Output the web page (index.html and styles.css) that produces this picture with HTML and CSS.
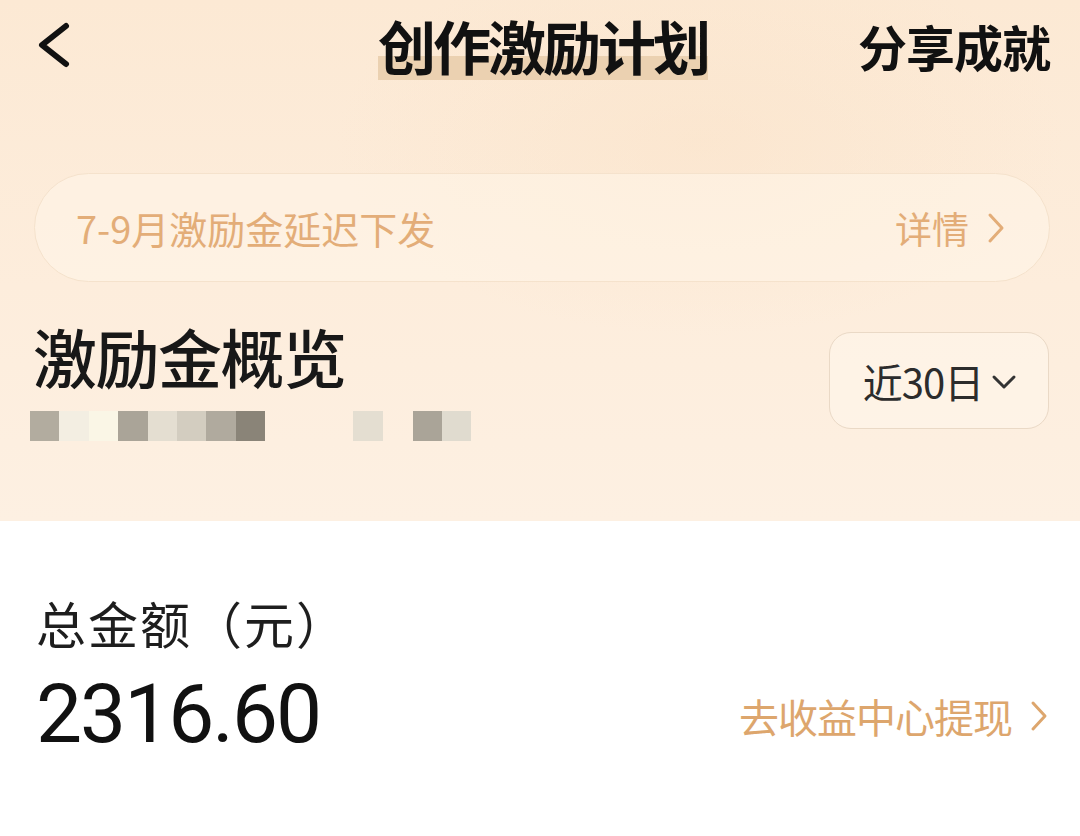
FILE: index.html
```html
<!DOCTYPE html>
<html lang="zh-CN">
<head>
<meta charset="utf-8">
<title>创作激励计划</title>
<link rel="stylesheet" href="styles.css">
</head>
<body>
<div class="page">
  <section class="top">
    <header class="nav">
      <div class="nav-left">
        <svg class="back" width="40" height="46" viewBox="0 0 40 46"><polyline points="32,4 8,23 32,42" fill="none" stroke="#111" stroke-width="6" stroke-linecap="round" stroke-linejoin="round"/></svg>
      </div>
      <h1 class="title"><span class="title-text">创作激励计划</span></h1>
      <div class="nav-right">分享成就</div>
    </header>

    <div class="notice">
      <span class="notice-text">7-9月激励金延迟下发</span>
      <span class="notice-more">详情<svg class="chev" width="18" height="32" viewBox="0 0 18 32"><polyline points="3,3 15,16 3,29" fill="none" stroke="#e3ad78" stroke-width="3" stroke-linecap="round" stroke-linejoin="round"/></svg></span>
    </div>

    <div class="overview">
      <div class="ov-left">
        <h2 class="ov-title">激励金概览</h2>
        <div class="mosaic">
          <span class="px c1"></span><span class="px c2"></span><span class="px c3"></span><span class="px c4"></span><span class="px c5"></span><span class="px c6"></span><span class="px c7"></span><span class="px c8"></span>
          <span class="px gap3"></span>
          <span class="px c5"></span><span class="px blank"></span><span class="px c4"></span><span class="px c5b"></span>
        </div>
      </div>
      <button class="range">近30日<svg class="down" width="26" height="16" viewBox="0 0 26 16"><polyline points="3,3 13,13 23,3" fill="none" stroke="#333" stroke-width="3" stroke-linecap="round" stroke-linejoin="round"/></svg></button>
    </div>
  </section>

  <section class="bottom">
    <div class="total-label">总金额（元）</div>
    <div class="total-row">
      <div class="amount">2316.60</div>
      <a class="withdraw">去收益中心提现<svg class="chev" width="18" height="32" viewBox="0 0 18 32"><polyline points="3,3 15,16 3,29" fill="none" stroke="#dda66d" stroke-width="3" stroke-linecap="round" stroke-linejoin="round"/></svg></a>
    </div>
  </section>
</div>
</body>
</html>
```

FILE: styles.css
```css
* { box-sizing: border-box; margin: 0; padding: 0; }
html, body { width: 1080px; height: 836px; overflow: hidden; }
body {
  font-family: "Noto Sans CJK SC", "Noto Sans", sans-serif;
  background: #ffffff;
  color: #161616;
}
.page { width: 1080px; height: 836px; display: flex; flex-direction: column; }

.top {
  background:
    radial-gradient(ellipse 520px 280px at 700px 140px, rgba(249,224,196,0.4), rgba(249,224,196,0) 70%),
    linear-gradient(180deg, #fce9d4 0%, #fdeddc 55%, #fdf0e2 100%);
  padding-bottom: 80px;
}

.nav {
  height: 90px;
  display: grid;
  grid-template-columns: 1fr auto 1fr;
  align-items: center;
  padding: 0 30px 0 34px;
}
.nav-left { display: flex; align-items: center; }
.back { display: block; }
.title {
  font-size: 58px;
  font-weight: 700;
  letter-spacing: -3px;
  line-height: 70px;
  color: #111;
  padding-left: 2px;
}
.title-text {
  background: linear-gradient(180deg, rgba(0,0,0,0) 0%, rgba(0,0,0,0) 63%, #ebd1b1 63%, #ebd1b1 92%, rgba(0,0,0,0) 92%);
}
.nav-right {
  justify-self: end;
  font-size: 49px;
  font-weight: 700;
  letter-spacing: -1px;
  color: #111;
}

.notice {
  margin: 83px 30px 0 34px;
  height: 109px;
  border-radius: 56px;
  border: 1.5px solid #f5e2cc;
  background: rgba(255, 246, 234, 0.55);
  display: flex;
  align-items: center;
  justify-content: space-between;
  padding: 0 44px 0 41px;
  color: #e3ad78;
}
.notice-text { font-size: 38px; letter-spacing: 0; }
.notice-more { font-size: 37px; display: flex; align-items: center; gap: 18px; }
.chev { display: block; }

.overview {
  margin-top: 38px;
  padding: 0 31px 0 30px;
  display: flex;
  align-items: center;
  justify-content: space-between;
}
.ov-title {
  font-size: 64px;
  font-weight: 500;
  letter-spacing: -1.5px;
  line-height: 70px;
  color: #181818;
  margin-left: 3px;
}
.mosaic { display: flex; margin-top: 21px; height: 30px; }
.px { width: 29.4px; height: 30px; display: block; }
.c1 { background: #b2ac9f; }
.c2 { background: #f3eee2; }
.c3 { background: #faf6e6; }
.c4 { background: #aaa498; }
.c5 { background: #e4ded1; }
.c5b { background: #e0dbcf; }
.c6 { background: #d3cdc0; }
.c7 { background: #b0aa9e; }
.c8 { background: #8a8478; }
.gap3 { width: 88px; }
.blank { width: 30px; }

.range {
  width: 220px;
  height: 97px;
  border-radius: 22px;
  border: 1.5px solid #ead9c6;
  background: rgba(255, 248, 238, 0.5);
  font-family: inherit;
  font-size: 40px;
  color: #2c2c2c;
  display: flex;
  align-items: center;
  justify-content: center;
  gap: 8px;
  padding-left: 2px;
  letter-spacing: -1px;
}
.down { display: block; margin-top: 2px; }

.bottom {
  flex: 1;
  background: #ffffff;
  padding: 72px 32px 0 36px;
}
.total-label {
  font-size: 50px;
  line-height: 58px;
  color: #1e1e1e;
  letter-spacing: 2px;
}
.total-row {
  margin-top: 16px;
  display: flex;
  align-items: center;
  justify-content: space-between;
}
.amount {
  font-family: Roboto, "Liberation Sans", sans-serif;
  font-size: 82px;
  line-height: 94px;
  letter-spacing: -2px;
  color: #111;
}
.withdraw {
  display: flex;
  align-items: center;
  gap: 18px;
  font-size: 40px;
  letter-spacing: -1px;
  color: #dda66d;
  margin-top: 4px;
}
```
